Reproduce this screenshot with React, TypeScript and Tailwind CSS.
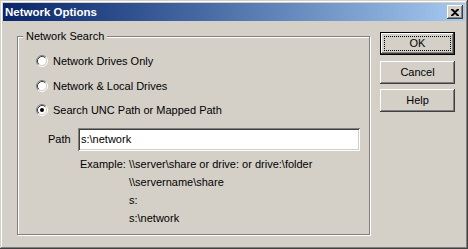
import React from 'react';

const font = { fontFamily: '"Liberation Sans", Arial, sans-serif' };

const bevel =
  'shadow-[inset_-1px_-1px_#404040,inset_1px_1px_#ffffff,inset_-2px_-2px_#808080,inset_2px_2px_#d4d0c8]';

const Radio = ({ checked }: { checked?: boolean }) => (
  <svg width="12" height="12" viewBox="0 0 12 12" className="shrink-0">
    <circle cx="6" cy="6" r="4.5" fill="#ffffff" />
    <path d="M2.11 9.89 A5.5 5.5 0 0 1 9.89 2.11" fill="none" stroke="#808080" />
    <path d="M9.89 2.11 A5.5 5.5 0 0 1 2.11 9.89" fill="none" stroke="#ffffff" />
    <path d="M2.82 9.18 A4.5 4.5 0 0 1 9.18 2.82" fill="none" stroke="#404040" />
    <path d="M9.18 2.82 A4.5 4.5 0 0 1 2.82 9.18" fill="none" stroke="#d4d0c8" />
    {checked && <circle cx="6" cy="6" r="2" fill="#000000" />}
  </svg>
);

const RadioRow = ({ label, checked }: { label: string; checked?: boolean }) => (
  <div className="flex h-[24px] items-center gap-[5px]">
    <Radio checked={checked} />
    <span>{label}</span>
  </div>
);

const Button = ({ label, isDefault }: { label: string; isDefault?: boolean }) => (
  <div
    className={`relative flex h-[23px] w-[75px] items-center justify-center ${
      isDefault ? 'border border-black' : ''
    }`}
  >
    <div className={`absolute inset-0 ${bevel}`} />
    {isDefault && (
      <div className="absolute inset-[3px] border border-dotted border-black" />
    )}
    <span className="relative">{label}</span>
  </div>
);

export default function App() {
  return (
    <div
      style={font}
      className="flex h-[249px] w-[468px] flex-col bg-[#d4d0c8] p-[3px] text-[11px] leading-[13px] text-black shadow-[inset_-1px_-1px_#404040,inset_1px_1px_#d4d0c8,inset_-2px_-2px_#808080,inset_2px_2px_#ffffff]"
    >
      {/* title bar */}
      <div className="flex h-[18px] items-center justify-between bg-gradient-to-r from-[#0a246a] to-[#a6caf0] pl-[2px] pr-[2px]">
        <span className="text-[11.5px] font-bold text-white">Network Options</span>
        <div className={`relative flex h-[14px] w-[16px] items-center justify-center bg-[#d4d0c8] ${bevel}`}>
          <svg width="8" height="7" viewBox="0 0 8 7">
            <path d="M0 0h2l2 2 2-2h2v1L5 3.5 8 6v1H6L4 5 2 7H0V6l3-2.5L0 1z" fill="#000000" />
          </svg>
        </div>
      </div>

      {/* body */}
      <div className="flex items-start gap-[10px] pl-[14px] pt-[11px]">
        <div className="relative mt-[4px] h-[199px] w-[353px] border border-[#808080] shadow-[1px_1px_0_#ffffff,inset_1px_1px_0_#ffffff]">
          <span className="absolute left-[5px] top-[-7px] bg-[#d4d0c8] px-[3px]">Network Search</span>
          <div className="flex flex-col pl-[18px] pt-[12px]">
            <RadioRow label="Network Drives Only" />
            <div className="mt-[1px]">
              <RadioRow label="Network & Local Drives" />
            </div>
            <RadioRow label="Search UNC Path or Mapped Path" checked />

            <div className="ml-[12px] mt-[6px] flex items-center">
              <span className="w-[30px]">Path</span>
              <div className="flex h-[23px] w-[282px] items-center bg-white pl-[3px] shadow-[inset_1px_1px_#808080,inset_-1px_-1px_#ffffff,inset_2px_2px_#404040,inset_-2px_-2px_#d4d0c8]">
                s:\network
              </div>
            </div>

            <div className="ml-[44px] mt-[4px] flex leading-[18px]">
              <span className="w-[49px]">Example:</span>
              <div className="flex flex-col">
                <span>\\server\share or drive: or drive:\folder</span>
                <span>\\servername\share</span>
                <span>s:</span>
                <span>s:\network</span>
              </div>
            </div>
          </div>
        </div>

        <div className="flex flex-col">
          <Button label="OK" isDefault />
          <div className="mt-[6px]">
            <Button label="Cancel" />
          </div>
          <div className="mt-[5px]">
            <Button label="Help" />
          </div>
        </div>
      </div>
    </div>
  );
}
